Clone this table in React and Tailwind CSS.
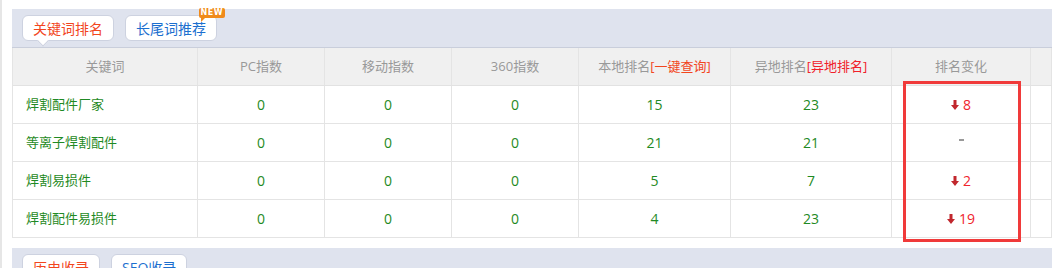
import React from "react";

const rows = [
  { kw: "焊割配件厂家", pc: 0, mob: 0, s360: 0, local: 15, remote: 23, change: 8 },
  { kw: "等离子焊割配件", pc: 0, mob: 0, s360: 0, local: 21, remote: 21, change: null },
  { kw: "焊割易损件", pc: 0, mob: 0, s360: 0, local: 5, remote: 7, change: 2 },
  { kw: "焊割配件易损件", pc: 0, mob: 0, s360: 0, local: 4, remote: 23, change: 19 },
];

const grid =
  "grid grid-cols-[185px_127px_127px_127px_152px_161px_139px_1fr]";

function DownArrow() {
  return (
    <svg width="8" height="10" viewBox="0 0 8 10" className="block">
      <path d="M2.5 0 H5.5 V5 H8 L4 10 L0 5 H2.5 Z" fill="#c1272d" />
    </svg>
  );
}

function Tab({ children, color, active, badge }) {
  return (
    <div
      className={`relative h-[26px] px-[10px] flex items-center bg-white border border-[#cdd2e0] rounded-[6px] text-[14px] ${color}`}
    >
      {children}
      {active && (
        <span className="absolute left-[16px] -bottom-[5px] w-[8px] h-[8px] bg-white border-r border-b border-[#cdd2e0] rotate-45" />
      )}
      {badge && (
        <span className="absolute -right-[9px] -top-[8px] flex flex-col items-start">
          <span className="h-[10px] px-[2px] bg-[#f08a1a] rounded-[2px] text-white text-[8px] leading-[10px] font-bold tracking-[0.5px] font-['DejaVu_Sans',sans-serif]">
            NEW
          </span>
          <span className="ml-[2px] w-0 h-0 border-t-[4px] border-t-[#f08a1a] border-r-[4px] border-r-transparent" />
        </span>
      )}
    </div>
  );
}

export default function App() {
  const cell = "border-r border-[#e4e4e4] flex items-center justify-center";
  return (
    <div className="w-[1052px] h-[268px] overflow-hidden bg-white flex font-['Open_Sans','Noto_Sans_CJK_SC',sans-serif]">
      <div className="w-[2px] bg-[#e6e6e6] shrink-0" />
      <div className="flex-1 pl-[10px] pt-[9px] min-w-0">
        {/* top band */}
        <div className="h-[39px] bg-[#dfe3ee] border-b border-[#c9cedb] flex items-start gap-[11px] pl-[10px] pt-[6px]">
          <Tab color="text-[#f2461e]" active>关键词排名</Tab>
          <Tab color="text-[#1c6fcf]" badge>长尾词推荐</Tab>
        </div>

        {/* table */}
        <div className="relative border-l border-[#e4e4e4]">
          <div className={`${grid} h-[38px] bg-[#f0f0f0] border-b border-[#e2e2e2] text-[13px] text-[#999999]`}>
            <div className={cell}>关键词</div>
            <div className={cell}>PC指数</div>
            <div className={cell}>移动指数</div>
            <div className={cell}>360指数</div>
            <div className={cell}>
              本地排名<span className="text-[#f2461e]">[一键查询]</span>
            </div>
            <div className={cell}>
              异地排名<span className="text-[#f0202a]">[异地排名]</span>
            </div>
            <div className={cell}>排名变化</div>
            <div className={cell}></div>
          </div>
          {rows.map((r, i) => (
            <div
              key={i}
              className={`${grid} h-[38px] border-b border-[#e4e4e4] text-[#1f8a24] text-[13px]`}
            >
              <div className="border-r border-[#e4e4e4] flex items-center pl-[13px]">{r.kw}</div>
              <div className={`${cell} text-[14px]`}>{r.pc}</div>
              <div className={`${cell} text-[14px]`}>{r.mob}</div>
              <div className={`${cell} text-[14px]`}>{r.s360}</div>
              <div className={`${cell} text-[14px]`}>{r.local}</div>
              <div className={`${cell} text-[14px]`}>{r.remote}</div>
              <div className={`${cell} text-[14px]`}>
                {r.change === null ? (
                  <span className="block w-[5px] h-[2px] bg-[#999999] mb-[5px]" aria-label="-" />
                ) : (
                  <span className="flex items-center gap-[4px] text-[#f0242c]">
                    <DownArrow />
                    {r.change}
                  </span>
                )}
              </div>
              <div className={cell}></div>
            </div>
          ))}
          {/* red highlight box */}
          <div className="absolute left-[890px] top-[33px] w-[118px] h-[161px] border-[3px] border-[#f03a3a] pointer-events-none" />
        </div>

        {/* bottom band */}
        <div className="mt-[10px] h-[40px] bg-[#dfe3ee] flex items-start gap-[11px] pl-[10px] pt-[6px]">
          <Tab color="text-[#f2461e]">历史收录</Tab>
          <Tab color="text-[#1c6fcf]">SEO收录</Tab>
        </div>
      </div>
    </div>
  );
}
